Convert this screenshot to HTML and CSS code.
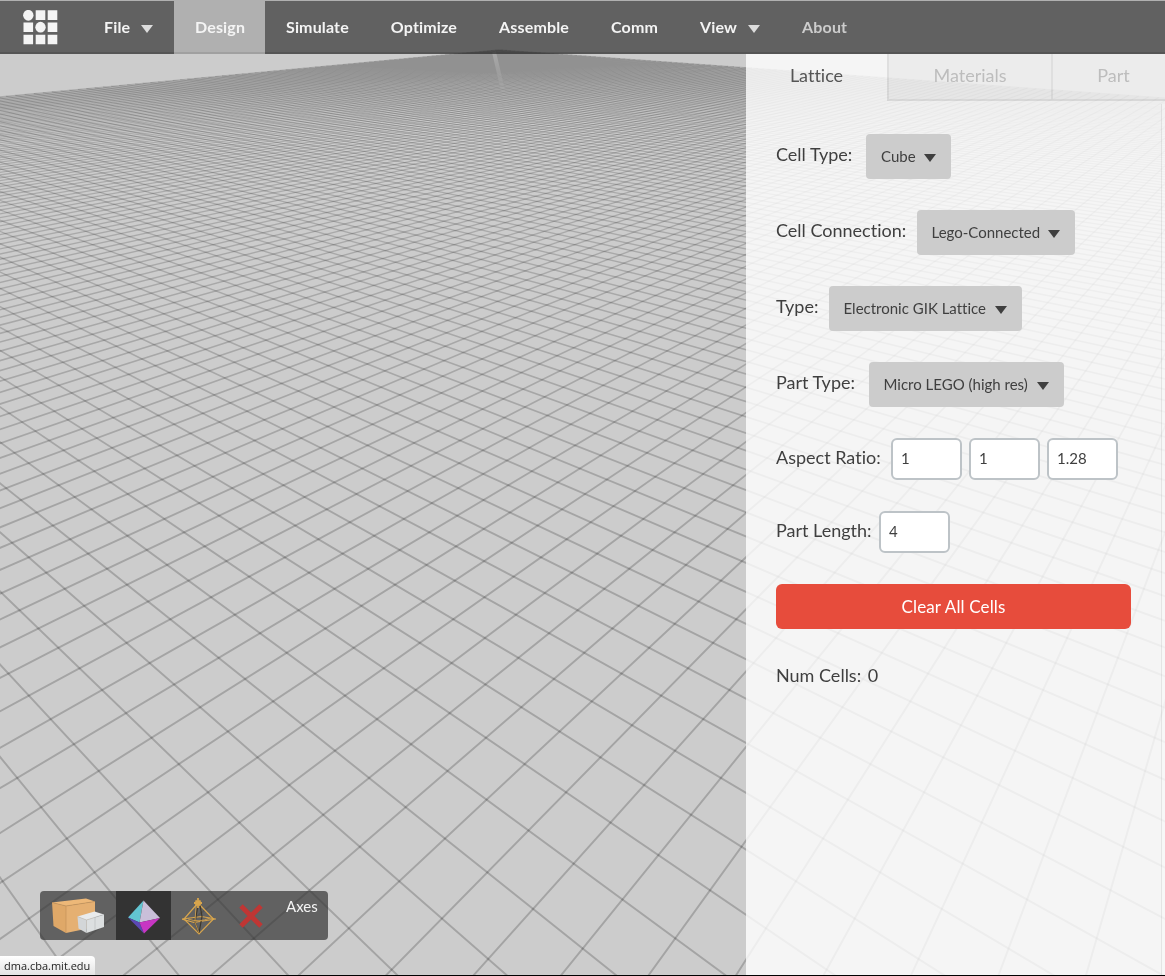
FILE: index.html
```html
<!DOCTYPE html>
<html lang="en">
<head>
<meta charset="utf-8">
<title>DMA</title>
<link rel="stylesheet" href="styles.css">
</head>
<body>
<canvas class="scene" id="scene" width="1165" height="975"></canvas>
<div class="app">
  <nav class="navbar">
    <a class="logo"><svg width="36" height="36" viewBox="0 0 36 36" fill="#f4f4f4"><ellipse cx="5.3" cy="5.3" rx="5.2" ry="5.4"/><path d="M12.7.3h9.6v9.6h-9.6zM24.7.3h9.6v9.6h-9.6zM.5 12.5h9.6v9.6H.5zM24.7 12.5h9.6v9.6h-9.6zM.5 24.7h9.6v9.6H.5zM12.7 24.7h9.6v9.6h-9.6zM24.7 24.7h9.6v9.6h-9.6z"/><ellipse cx="17.5" cy="17.2" rx="5.2" ry="5.4"/></svg></a>
    <a class="item file">File<i class="caret"></i></a>
    <a class="item active">Design</a>
    <a class="item">Simulate</a>
    <a class="item">Optimize</a>
    <a class="item">Assemble</a>
    <a class="item">Comm</a>
    <a class="item">View<i class="caret"></i></a>
    <a class="item muted">About</a>
  </nav>
  <main class="workspace">
    <section class="viewport">
      <div class="tools">
        <a class="tool boxes"><svg width="56" height="38" viewBox="0 0 56 38"><path d="M1 4.500L15 8v27L2.500 28z" fill="#dfa868"/><path d="M1 4.500L35 .500 44 3.500 15 8z" fill="#edb878"/><path d="M15 8L44 3.500V29L15 35z" fill="#e5b072"/><path d="M1 4.500L15 8v27M15 8l29-4.500" fill="none" stroke="#c08e55" stroke-width=".6"/><path d="M26.500 18.500l9 3.500v13l-8-4.500z" fill="#d3d6d8"/><path d="M26.500 18.500L43.500 13.500l9.500 3-17.500 5.500z" fill="#e9ebec"/><path d="M35.500 22L53 16.500v12.500l-17.500 6z" fill="#dcdfe0"/><path d="M35.500 22L53 16.500M35.500 22v13M44 19v13M26.500 18.500l9 3.500" fill="none" stroke="#b5b9bb" stroke-width=".6"/></svg></a>
        <a class="tool selected"><svg width="34" height="34" viewBox="0 0 34 34"><path d="M16.500.500L1 17.500l11.500 5z" fill="#62c5d2"/><path d="M16.500.500L12.500 22.500 33 18z" fill="#c9bfd9"/><path d="M1 17.500l11.500 5L17 33.500z" fill="#5c48b4"/><path d="M12.500 22.500L33 18 17 33.500z" fill="#c836c3"/></svg></a>
        <a class="tool wire"><svg width="34" height="38" viewBox="0 0 34 38" fill="none" stroke="#d8a54c" stroke-width="1.200"><path d="M16 6L2 22l15 15 14.500-15z"/><path d="M0 22l12 3.500L33.500 22l-14-2.500zM0 22h3M30 22h4"/><path d="M16 8l-3 17.500L17 36M18 8l2 11.500L17 36" stroke="#3e382c"/><path d="M14 8l-1 17.500L17 36" stroke-width=".8"/><path d="M6 22q11 4 22-1" stroke-width=".8"/><path d="M13.500 3.500l5 5M18.500 3.500l-5 5M16 1v10M12 6h8" stroke-width="1.800"/></svg></a>
        <a class="tool cross"><svg width="24" height="24" viewBox="0 0 24 24" stroke="#bf3634" stroke-width="4.800"><path d="M2 2l20 20M22 2L2 22"/></svg></a>
        <a class="axes">Axes</a>
      </div>
      <div class="status">dma.cba.mit.edu</div>
    </section>
    <aside class="panel">
      <div class="tabs"><a class="tab on">Lattice</a><a class="tab materials">Materials</a><a class="tab part">Part</a></div>
      <div class="form">
        <div class="row"><label class="l1">Cell Type:</label><button class="select s1">Cube<i class="caret"></i></button></div>
        <div class="row"><label class="l2">Cell Connection:</label><button class="select s2">Lego-Connected<i class="caret"></i></button></div>
        <div class="row"><label class="l3">Type:</label><button class="select s3">Electronic GIK Lattice<i class="caret"></i></button></div>
        <div class="row"><label class="l4">Part Type:</label><button class="select s4">Micro LEGO (high res)<i class="caret"></i></button></div>
        <div class="row fields"><label class="l5">Aspect Ratio:</label><input value="1"><input value="1"><input value="1.28"></div>
        <div class="row fields"><label class="l6">Part Length:</label><input value="4"></div>
        <button class="clear">Clear All Cells</button>
        <div class="count">Num Cells: <span>0</span></div>
      </div>
      <div class="resize"></div>
    </aside>
  </main>
</div>
<script src="scene.js"></script>
</body>
</html>
```
FILE: styles.css
```css
* { box-sizing: border-box; }
body { margin: 0; width: 1165px; height: 976px; overflow: hidden; background: #000; font-family: Lato, sans-serif; font-variant-ligatures: none; color: #3f3f3f; }
.scene { position: absolute; left: 0; top: 0; display: block; }
.app { position: relative; height: 975px; display: flex; flex-direction: column; }
.navbar { height: 54px; flex: none; display: flex; background: rgba(51, 51, 51, .7); border-top: 1px solid #b0b0b0; box-shadow: inset 0 -2px rgba(0, 0, 0, .13); }
.logo { flex: none; width: 83px; padding: 8.5px 0 0 22.5px; }
.item { padding: 0 21px; line-height: 51px; font-size: 16px; letter-spacing: .15px; font-weight: 700; color: #f4f4f4; white-space: nowrap; }
.item.file { width: 91px; }
.item.active { width: 91px; padding-right: 0; background: #b0b0b0; box-shadow: inset 0 -2px #a0a0a0; }
.item.muted { color: #ccc; }
.caret { display: inline-block; border: 6px solid transparent; border-top: 8px solid; border-bottom: 0; margin-left: 11px; color: #ddd; }
.workspace { flex: 1; display: flex; }
.viewport { width: 746px; display: flex; flex-direction: column; justify-content: flex-end; align-items: flex-start; }
.tools { display: flex; height: 49px; width: 288px; margin: 0 0 16px 40px; background: rgba(51, 51, 51, .7); border-radius: 4px; }
.tool { width: 55px; display: flex; align-items: center; justify-content: center; padding-top: 3px; }
.tool.boxes { width: 76px; padding: 3px 0 0 2px; }
.tool.wire { padding-top: 1px; }
.tool.selected { background: #333; }
.tool.cross { width: 50px; padding-top: 1px; }
.axes { font-size: 15px; color: #f4f4f4; padding: 6px 0 0 10px; }
.status { width: 95px; height: 19px; padding-left: 4px; border-radius: 0 4px 0 0; background: linear-gradient(#fff, #e4e4e4); font: 11px/20px "Open Sans", sans-serif; color: #222; white-space: nowrap; }
.panel { position: relative; width: 419px; background: rgba(255, 255, 255, .8); overflow: hidden; }
.tabs { display: flex; height: 47px; }
.tab { flex: none; font-size: 18px; line-height: 43px; text-align: center; color: #bdbdbd; background: rgba(0, 0, 0, .035); border-bottom: 2px solid rgba(0, 0, 0, .06); border-left: 2px solid rgba(0, 0, 0, .06); }
.tab.on { width: 141px; padding-right: 2px; color: #555; background: none; border-color: transparent; }
.tab.materials { width: 164px; }
.tab.part { width: 123px; }
.form { padding: 33px 34px 0 30px; }
.row { height: 45px; margin-bottom: 31px; display: flex; font-size: 18px; }
.row label { line-height: 41px; flex: none; }
.l1 { width: 90px; }
.l2 { width: 141px; }
.l3 { width: 53px; }
.l4 { width: 93px; }
.l5 { width: 115px; }
.l6 { width: 103px; }
.select { display: flex; align-items: center; justify-content: space-between; height: 45px; border: 0; border-radius: 4px; background: #ccc; padding: 0 15px 0 14.500px; font: 15px/45px Lato, sans-serif; font-variant-ligatures: none; color: #3f3f3f; white-space: nowrap; }
.select .caret { color: #3f3f3f; margin: 2px 0 0; }
.s1 { width: 85px; padding-left: 15px; }
.s2 { width: 158px; }
.s3 { width: 193px; }
.s4 { width: 195px; }
.row.fields { height: 42px; }
.row.fields label { line-height: 39px; }
.row input { width: 71px; height: 42px; margin-right: 7px; border: 2px solid #bdc3c7; border-radius: 6px; background: #fff; padding: 0 8px 2px; font: 15px Lato, sans-serif; color: #3f3f3f; }
.clear { width: 355px; height: 45px; display: block; border: 0; border-radius: 6px; background: #e74c3c; color: #fff; font: 17px Lato, sans-serif; letter-spacing: .15px; }
.count { margin-top: 34px; font-size: 18px; line-height: 24px; }
.count span { margin-left: 2px; }
.resize { position: absolute; right: 0; top: 50px; bottom: 0; width: 4px; border-left: 1px solid rgba(0, 0, 0, .08); background: rgba(255, 255, 255, .2); }
```
FILE: scene.js
```js
// Ground plane seen in perspective: cell (i, j) to canvas pixels.
const ctx = document.getElementById('scene').getContext('2d');
const I0 = -112, J0 = -115, W_MIN = 0.7, E = 0.009609;
const depth = (i, j) => 1 - E * (4 * i + 5 * j);
const project = (i, j) => {
  const w = depth(i, j);
  return [(573.67 + 24.85 * i - 66.19 * j) / w, -33 + 896.67 / w];
};
ctx.fillStyle = '#ccc';
ctx.fillRect(0, 0, 1165, 975);

const far = (1 - W_MIN) / E;
const alongJ = new Path2D(), alongI = new Path2D();
for (let i = I0; i <= 160; i++) {
  const j = Math.min(160, (far - 4 * i) / 5);
  if (j <= J0) continue;
  alongJ.moveTo(...project(i, J0));
  alongJ.lineTo(...project(i, j));
}
for (let j = J0; j <= 160; j++) {
  const i = Math.min(160, (far - 5 * j) / 4);
  if (i <= I0) continue;
  alongI.moveTo(...project(I0, j));
  alongI.lineTo(...project(i, j));
}

// Lines get thinner and lighter towards the horizon, one band of rows at a time.
for (let y = 40; y < 975; y += 12) {
  const t = Math.min(1, (y - 40) / 500);
  ctx.save();
  ctx.beginPath();
  ctx.rect(0, y, 1165, 12);
  ctx.clip();
  ctx.lineWidth = 1 + 0.95 * t;
  ctx.strokeStyle = `rgba(0,0,0,${0.155 + 0.04 * t})`;
  ctx.stroke(alongJ);
  ctx.stroke(alongI);
  ctx.restore();
}

// Bright seam running down from the far corner.
const seam = ctx.createLinearGradient(0, 52, 0, 95);
seam.addColorStop(0, 'rgba(204,204,204,0.4)');
seam.addColorStop(1, 'rgba(204,204,204,0)');
ctx.strokeStyle = seam;
ctx.lineWidth = 4;
ctx.beginPath();
ctx.moveTo(494, 52);
ctx.lineTo(504, 95);
ctx.stroke();
```
